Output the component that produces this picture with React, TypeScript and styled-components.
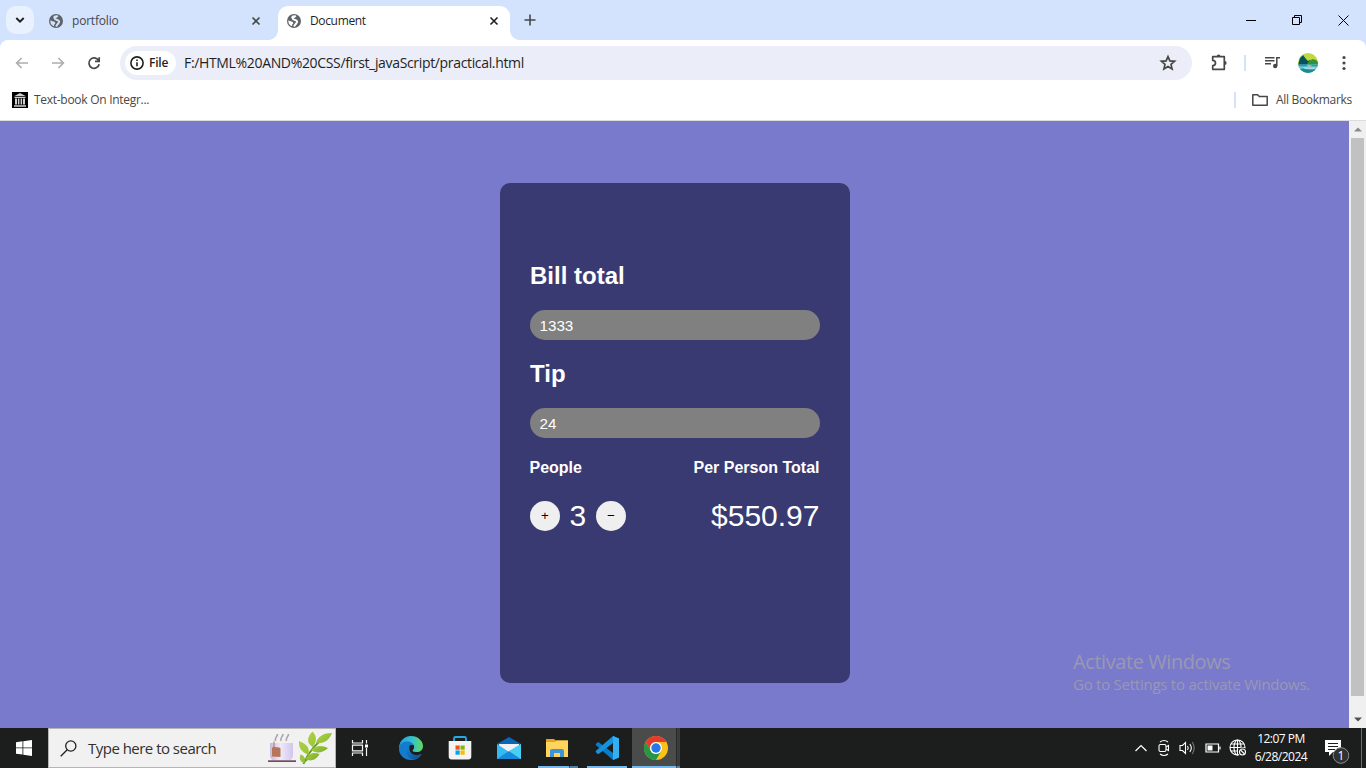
import React from "react";
import styled, { createGlobalStyle } from "styled-components";

const GlobalStyle = createGlobalStyle`
  * { box-sizing: border-box; }
  body { margin: 0; overflow: hidden; }
  svg { display: block; flex: none; }
  button { border: 0; padding: 0; background: none; font: inherit; color: inherit; }
`;

const ui = `"Segoe UI", "Open Sans", "Noto Sans", sans-serif`;

const Screen = styled.div`
  width: 1366px;
  height: 768px;
  display: flex;
  flex-direction: column;
  font-family: ${ui};
  overflow: hidden;
`;

const Label = styled.span<{ $size: number; $track?: number; $color?: string; $weight?: number }>`
  font-size: ${(p) => p.$size}px;
  letter-spacing: ${(p) => p.$track ?? 0}px;
  color: ${(p) => p.$color ?? "#1f1f1f"};
  font-weight: ${(p) => p.$weight ?? 400};
  line-height: 1.3;
  white-space: nowrap;
`;

/* ---------- browser frame ---------- */
const TabStrip = styled.div`
  height: 40px;
  display: flex;
  background: #d3e3fd;
  padding-left: 6px;
`;

const TabSearch = styled.button`
  width: 28px;
  height: 28px;
  margin-top: 6px;
  border-radius: 10px;
  background: #e9f1fe;
  display: grid;
  place-items: center;
`;

const Tab = styled.div<{ $active?: boolean }>`
  position: relative;
  width: ${(p) => (p.$active ? 232 : 244)}px;
  height: 34px;
  margin-top: 6px;
  display: flex;
  align-items: center;
  padding: 0 ${(p) => (p.$active ? 9 : 15)}px 5px ${(p) => (p.$active ? 8 : 14)}px;
  border-radius: 10px 10px 0 0;
  background: ${(p) => (p.$active ? "#fff" : "transparent")};
  gap: 8px;
  ${(p) =>
    p.$active &&
    `&::before, &::after {
      content: "";
      position: absolute;
      bottom: 0;
      width: 10px;
      height: 10px;
    }
    &::before { left: -10px; background: radial-gradient(circle at 0 0, transparent 9.5px, #fff 10.5px); }
    &::after { right: -10px; background: radial-gradient(circle at 100% 0, transparent 9.5px, #fff 10.5px); }`}
`;

const CloseButton = styled.button`
  margin-left: auto;
  width: 14px;
  height: 14px;
  display: grid;
  place-items: center;
`;

const NewTab = styled.button`
  width: 20px;
  height: 40px;
  margin-left: 10px;
  display: grid;
  place-items: center;
`;

const WindowButtons = styled.div`
  margin-left: auto;
  display: flex;
  height: 40px;
`;

const WindowButton = styled.button`
  width: 46px;
  display: grid;
  place-items: center;
`;

const ToolbarShell = styled.div`
  background: #d3e3fd;
`;

const Toolbar = styled.div`
  height: 46px;
  display: flex;
  align-items: center;
  background: #fff;
  border-radius: 8px 8px 0 0;
  padding: 0 12px;
`;

const NavButtons = styled.div`
  width: 108px;
  display: flex;
  gap: 16px;
`;

const Omnibox = styled.div`
  width: 1072px;
  height: 34px;
  border-radius: 17px;
  background: #ebeef8;
  display: flex;
  align-items: center;
  padding: 0 14px 0 5px;
`;

const FileChip = styled.div`
  width: 51px;
  height: 24px;
  border-radius: 12px;
  background: #fff;
  display: flex;
  align-items: center;
  gap: 4px;
  padding-left: 4px;
  margin-right: 8px;
`;

const StarSlot = styled.span`
  margin-left: auto;
`;

const Divider = styled.span<{ $gap: number }>`
  width: 2px;
  height: 16px;
  background: #d3e3fd;
  margin-right: ${(p) => p.$gap}px;
`;

const ToolbarActions = styled.div`
  display: flex;
  align-items: center;
  padding-left: 17px;
`;

const ActionSlot = styled.span<{ $gap: number }>`
  margin-right: ${(p) => p.$gap}px;
`;

const Bookmarks = styled.div`
  height: 35px;
  background: #fff;
  border-bottom: 1px solid #dcdcdc;
  display: flex;
  align-items: center;
  padding: 0 14px 6px 12px;
  gap: 6px;
`;

const AllBookmarks = styled.div`
  margin-left: auto;
  display: flex;
  align-items: center;
`;

/* ---------- page ---------- */
const Viewport = styled.div`
  position: relative;
  height: 607px;
  display: flex;
`;

const Page = styled.main`
  flex: 1;
  background: #797acc;
  display: flex;
  justify-content: center;
  align-items: flex-start;
  padding: 62px 0 0 1px;
  font-family: Arial, "Liberation Sans", sans-serif;
`;

const Card = styled.section`
  width: 350px;
  height: 500px;
  border-radius: 10px;
  background: #3a3a72;
  color: #fff;
  padding: 79px 30px 0;
`;

const Heading = styled.h2`
  margin: 0 0 20px;
  height: 28px;
  line-height: 28px;
  font-size: 24px;
`;

const Field = styled.input`
  display: block;
  width: 290px;
  height: 30px;
  margin-bottom: 20px;
  border: 0;
  border-radius: 15px;
  background: #808080;
  color: #fff;
  font: 15.2px Arial, "Liberation Sans", sans-serif;
  padding: 0 10px 0 9.5px;
  outline: 0;
`;

const Split = styled.div<{ $height: number }>`
  display: flex;
  justify-content: space-between;
  align-items: center;
  height: ${(p) => p.$height}px;
  margin: 0 0.5px 0 -0.5px;
`;

const SmallHeading = styled.h4`
  margin: 0;
  font-size: 16px;
  line-height: 18px;
  padding-top: 2px;
`;

const Totals = styled.div`
  margin-top: 23px;
`;

const Counter = styled.div`
  display: flex;
  align-items: center;
  gap: 9.6px;
  padding-left: 0.5px;
`;

const Amount = styled.span`
  font-size: 30px;
  line-height: 34px;
  padding-bottom: 1px;
`;

const RoundButton = styled.button`
  width: 30px;
  height: 30px;
  border-radius: 50%;
  background: #efefef;
  color: #000;
  font-size: 13.333px;
  line-height: 30px;
  text-align: center;
`;

const ScrollBar = styled.div`
  width: 17px;
  background: #f0f0f0;
  display: flex;
  flex-direction: column;
  align-items: center;
`;

const ScrollArrow = styled.div`
  height: 17px;
  display: grid;
  place-items: center;
`;

const ScrollThumb = styled.div`
  width: 13px;
  height: 558px;
  background: #c1c1c1;
  margin-bottom: 15px;
`;

const Watermark = styled.div`
  position: absolute;
  left: 1073px;
  top: 528px;
  display: flex;
  flex-direction: column;
`;

/* ---------- taskbar ---------- */
const Taskbar = styled.div`
  height: 40px;
  background: #1c1e1e;
  display: flex;
`;

const StartButton = styled.button`
  width: 48px;
  display: grid;
  place-items: center;
`;

const SearchBox = styled.div`
  width: 288px;
  height: 40px;
  background: #f1f1f1;
  border: 1px solid #b5b5b5;
  display: flex;
  align-items: center;
  padding: 0 2px 0 11px;
`;

const SearchText = styled.div`
  flex: 1;
  margin-left: 11px;
`;

const AppButton = styled.div<{ $width?: number; $current?: boolean; $open?: boolean; $offset?: number; $inset?: number }>`
  width: ${(p) => p.$width ?? 49}px;
  height: 40px;
  display: flex;
  align-items: center;
  justify-content: center;
  margin-left: ${(p) => p.$offset ?? 0}px;
  background: ${(p) => (p.$current ? "#4a4b4b" : "transparent")};
  border-bottom: 2px solid ${(p) => (p.$open ? "#76b9ed" : "transparent")};
  padding-top: 2px;
  padding-left: ${(p) => p.$inset ?? 0}px;
`;

const StackEdge = styled.div<{ $current?: boolean }>`
  width: ${(p) => (p.$current ? 4 : 9)}px;
  height: 40px;
  border-left: 1px solid ${(p) => (p.$current ? "#292b2b" : "transparent")};
  background: ${(p) => (p.$current ? "#3a3b3b" : "transparent")};
  border-bottom: 2px solid #557f9f;
`;

const Tray = styled.div`
  margin-left: auto;
  display: flex;
  align-items: center;
`;

const TrayIcons = styled.div`
  display: flex;
  align-items: center;
  gap: 8.5px;
`;

const Clock = styled.div`
  width: 68px;
  display: flex;
  flex-direction: column;
  align-items: center;
  gap: 2px;
`;

const Notifications = styled.div`
  width: 47px;
  height: 40px;
  border-right: 1px solid #6a6a6a;
  margin-right: 4px;
  padding: 9px 0 0 10px;
`;

/* ---------- icons ---------- */
const Globe = ({ land = "#fff" }: { land?: string }) => (
  <svg width="16" height="16" viewBox="0 0 16 16">
    <circle cx="8" cy="8" r="7" fill="#5f6368" />
    <path
      d="M9.600 2.700C8.900 4.200 6.800 3.900 6.500 5.200 6.300 6.500 8.300 6.600 9.500 7.100 11.200 7.800 11.800 8.600 10.600 10 9.700 11 8.900 12.200 8 13.500"
      fill="none"
      stroke={land}
      strokeWidth="1.900"
    />
    <path d="M2.400 7.200 4.400 8.200 6.600 8.800 7.400 10.200 6.300 11.200 6 13.300A5.700 5.700 0 0 1 2.400 7.200ZM6.500 2.500 9.800 2.600 8.200 4.500 6.500 5.500 5 4.300Z" fill={land} />
  </svg>
);

const Cross = ({ color = "#474747" }: { color?: string }) => (
  <svg width="10" height="10" viewBox="0 0 10 10" stroke={color} strokeWidth="1.6">
    <path d="m1.500 1.500 7 7M8.500 1.500l-7 7" />
  </svg>
);

const Arrow = ({ flip }: { flip?: boolean }) => (
  <svg width="20" height="20" viewBox="0 0 20 20" fill="none" stroke="#adadad" strokeWidth="1.6">
    <path d={flip ? "M4 10h11M10.4 5l5 5-5 5" : "M16 10H5M9.6 5l-5 5 5 5"} />
  </svg>
);

const Reload = () => (
  <svg width="20" height="20" viewBox="0 0 20 20" fill="none" stroke="#474747" strokeWidth="1.7">
    <path d="M14.6 7.4A5.2 5.2 0 1 0 15.2 11.3M15.2 4.2V8.3H11" />
  </svg>
);

const Info = () => (
  <svg width="16" height="16" viewBox="0 0 16 16" fill="none" stroke="#1f1f1f" strokeWidth="1.6">
    <circle cx="8" cy="8" r="6.1" />
    <path d="M8 7.2v4M8 4.5v1.5" />
  </svg>
);

const Star = () => (
  <svg width="20" height="20" viewBox="0 0 20 20" fill="none" stroke="#474747" strokeWidth="1.7">
    <path d="m10 3.600 1.900 4.300 4.700.4-3.600 3.100 1.100 4.600-4.100-2.500L5.900 16 7 11.400 3.400 8.300l4.700-.4Z" />
  </svg>
);

const Puzzle = () => (
  <svg width="20" height="20" viewBox="0 0 20 20">
    <path d="M3.700 3.700H15.300v12.600H3.700v-3.700c2-.1 2.800-1.100 2.800-2.600S5.700 7.500 3.700 7.400Z" fill="none" stroke="#474747" strokeWidth="1.700" strokeLinejoin="round" />
    <path d="M7.700 3.300a1.900 1.900 0 0 1 3.800 0ZM15.600 8a2 2 0 0 1 0 4Z" fill="#474747" />
  </svg>
);

const Queue = () => (
  <svg width="18" height="16" viewBox="0 0 18 16" stroke="#474747" strokeWidth="1.500" fill="none">
    <path d="M1 2.800h9.500M1 5.800h9.500M1 8.800h6M12.800 11V2.800H16" />
    <circle cx="11.200" cy="11" r="2.200" fill="#474747" stroke="none" />
  </svg>
);

const Avatar = () => (
  <svg width="20" height="20" viewBox="0 0 20 20">
    <clipPath id="avatar"><circle cx="10" cy="10" r="10" /></clipPath>
    <g clipPath="url(#avatar)">
      <path d="M0 0h20v20H0Z" fill="#bfd843" />
      <path d="M0 12 2 5 5 2l3 4 2 2 2-1v5Z" fill="#07535a" />
      <path d="M9 12c1-6 9-9 12-1v2H9Z" fill="#36913b" />
      <path d="M0 11.500h20V20H0Z" fill="#65c8df" />
      <path d="M0 12.300h9v1H2zM12 12.300h8v1h-7zM2 16c4-2 8 2 15 0v4H2Z" fill="#1e8a91" />
      <path d="M5 14.500h12v1.300H7z" fill="#b0e5ed" />
      <path d="M10 12.500h4l-2 2z" fill="#e5a7a1" />
    </g>
  </svg>
);

const Dots = () => (
  <svg width="6" height="16" viewBox="0 0 6 16" fill="#474747">
    <circle cx="3" cy="2.500" r="1.600" /><circle cx="3" cy="8" r="1.600" /><circle cx="3" cy="13.500" r="1.600" />
  </svg>
);

const Archive = () => (
  <svg width="16" height="16" viewBox="0 0 16 16">
    <path d="M0 0h16v16H0Z" fill="#000" />
    <path d="M2 4.200 8 1l6 3.200ZM2.500 5h11v1h-11ZM3 6.500h2v6H3zM5.900 6.500h1.500v6H5.900zM8.600 6.500h1.500v6H8.600zM11 6.500h2v6h-2zM2 13.200h12v1.500H2z" fill="#d0d0d0" />
  </svg>
);

const Folder = () => (
  <svg width="18" height="14" viewBox="0 0 18 14" fill="none" stroke="#474747" strokeWidth="1.500">
    <path d="M1.800 1.800h4.800l1.700 1.700h7.900v8.700H1.800Z" strokeLinejoin="round" />
  </svg>
);

const TeaAndLeaves = () => (
  <svg width="66" height="36" viewBox="0 0 66 36">
    <defs>
      <linearGradient id="cup"><stop stopColor="#c5b8d8" /><stop offset=".45" stopColor="#eee9fb" /><stop offset="1" stopColor="#d1c6eb" /></linearGradient>
      <linearGradient id="leaf" x1="0" y1="0" x2="1" y2="1"><stop stopColor="#b4d34b" /><stop offset=".5" stopColor="#9cc63a" /><stop offset="1" stopColor="#5a9a22" /></linearGradient>
    </defs>
    <g fill="none" stroke="#a9a4aa" strokeWidth="1.600">
      <path d="M8.500 11c-1.500-3 2-4 2-7M14 11c-1.500-3 2-4 2-7M19.500 11c-1.500-3 2-4 2-7" />
    </g>
    <path d="M3 13h23v12c0 3.500-2 5.500-5.500 5.500h-12C5 30.500 3 28.500 3 25Z" fill="url(#cup)" />
    <path d="M6.500 11.500h1V17l5 .5 1 1V27L5 26.500V18l1.500-1.500Z" fill="#b87458" />
    <path d="M1 30.300h28V32H1Z" fill="#76485e" />
    <path d="M36.500 34C41 23 47 14 60 6M38 31c2-2 4-3 7-4" fill="none" stroke="#5f9a28" strokeWidth="1.800" />
    <g fill="url(#leaf)">
      <path d="M46 17C39 13 40 7 45.500 1.500c5 5 4 10 .5 15.500ZM49 13c2-7 8-10 16-10-3 8-9 11-16 10ZM41.500 25c-7-3-10-7-9.500-14 8 3 11 7 9.500 14ZM44 20c5-5 11-5 17-2-5 5-12 6-17 2ZM37 33c-4-1-5-5-3.500-8.500 4 1 6 5 3.500 8.500ZM38.500 29c4-6 8-7 14-5-3 6-9 8-14 5Z" />
    </g>
  </svg>
);

const TaskView = () => (
  <svg width="18" height="16" viewBox="0 0 18 16" fill="none" stroke="#f4f4f4" strokeWidth="1.200">
    <path d="M1.500 0v3h10V0M1.500 16v-3h10v3M1.500 5.200h10v5.600h-10ZM15.500 0v3.500M15.500 8v8" />
    <path d="M14 4.500h3v3h-3z" fill="#fff" stroke="none" />
  </svg>
);

const Edge = () => (
  <svg width="24" height="24" viewBox="0 0 24 24">
    <defs>
      <linearGradient id="edgeTop" x1="0" x2="1"><stop stopColor="#259ee2" /><stop offset=".55" stopColor="#35c1cf" /><stop offset="1" stopColor="#62d957" /></linearGradient>
      <linearGradient id="edgeLow" x1="0" y1="0" x2="1" y2="1"><stop stopColor="#1686d8" /><stop offset="1" stopColor="#0c4a91" /></linearGradient>
    </defs>
    <path d="M0 11C1 4 6 0 12 0c7 0 12 5 12 10 0 4-3 6-6 6-4 0-5-1-4-2 3-4 0-7-4-7C5 7 1 9 0 14Z" fill="url(#edgeTop)" />
    <path d="M0 13C0 8 4 5.500 8 5.500c4 0 6 2 6.500 4C12 8 8 10 8 14c0 5 6 8 14.500 4-2 4-6 6-10.500 6C5 24 0 19 0 13Z" fill="#137ccc" />
    <path d="M10.500 9C7 11 6 14 7.500 18c1.600 4 5 5.500 7.500 5.500 3-.8 6-2.500 7.500-5.500C16 21 9 18 10.500 9Z" fill="url(#edgeLow)" />
  </svg>
);

const Store = () => (
  <svg width="24" height="24" viewBox="0 0 24 24">
    <path d="M6 6V2.500C6 1.400 6.700 1 7.500 1h9c.8 0 1.500.4 1.500 1.500V6" fill="none" stroke="#27a9e5" strokeWidth="1.800" />
    <path d="M.7 5h22.600v15.500c0 2-1 3-3 3H3.700c-2 0-3-1-3-3Z" fill="#f3f3f3" />
    <path d="M7.500 9.500h4.200v4.200H7.500z" fill="#f25022" /><path d="M12.500 9.500h4.200v4.200h-4.200z" fill="#7fba00" />
    <path d="M7.500 14.500h4.200v4.200H7.500z" fill="#00a4ef" /><path d="M12.500 14.500h4.200v4.200h-4.200z" fill="#ffb900" />
  </svg>
);

const Mail = () => (
  <svg width="24" height="24" viewBox="0 0 24 24">
    <path d="M0 8 12 1l12 7v5H0Z" fill="#0967b7" />
    <path d="M2 8h20v9H2Z" fill="#f2f2f2" />
    <path d="M0 8v15h24V8L12 16Z" fill="#35b9f1" />
    <path d="m0 23 12-8 12 8Z" fill="#178bd9" /><path d="M12 15 24 8v15Z" fill="#48cff5" />
  </svg>
);

const Explorer = () => (
  <svg width="24" height="22" viewBox="0 0 24 22">
    <path d="M1 2h8l2 1.500h12v6H1Z" fill="#e7a31c" />
    <path d="M1 5h9l1.500-1.500H23V20H1Z" fill="#ffd45d" />
    <path d="M5 20v-6c0-1.200.8-2 2-2h10c1.200 0 2 .8 2 2v6h-4v-4H9v4Z" fill="#3f94d8" />
  </svg>
);

const Code = () => (
  <svg width="24" height="24" viewBox="0 0 24 24">
    <path d="m18 0 6 2.500v19L18 24 1 9.200c-.5-.5-.5-1 0-1.500l1.500-1.300c.5-.4 1-.3 1.500 0L18 17Z" fill="#087dcb" />
    <path d="M18 7 4 17.800c-.5.300-1 .300-1.500 0L1 16.300c-.5-.4-.5-1 0-1.500L18 0Z" fill="#1593dd" />
    <path d="m18 0 6 2.500v19L18 24Z" fill="#35aff4" />
  </svg>
);

const Chrome = () => (
  <svg width="24" height="24" viewBox="0 0 24 24">
    <circle cx="12" cy="12" r="12" fill="#fbc116" />
    <path d="M1.600 6A12 12 0 0 1 22.400 6H12a6 6 0 0 0-5.200 9Z" fill="#e33b2e" />
    <path d="M1.600 6A12 12 0 0 0 12 24l5.200-9a6 6 0 0 1-10.400 0Z" fill="#269746" />
    <circle cx="12" cy="12" r="6" fill="#fff" /><circle cx="12" cy="12" r="4.700" fill="#2678e8" />
  </svg>
);

const TrayCamera = () => (
  <svg width="14" height="18" viewBox="0 0 14 18" fill="none" stroke="#fff" strokeWidth="1.100">
    <path d="M3 3q4-3 8 0M3 15q4 3 8 0" />
    <rect x="2" y="5.500" width="7" height="7" rx="1.500" /><path d="m9 8 2.500-1.500v5L9 10" />
  </svg>
);
const TraySound = () => (
  <svg width="17" height="16" viewBox="0 0 17 16" fill="none" stroke="#fff" strokeWidth="1.100">
    <path d="M1 5.500h2.500l3-3v11l-3-3H1ZM8.500 6q1.500 2 0 4M10.800 4q3 4 0 8" /><path d="M13.200 2q4 6 0 12" stroke="#777" />
  </svg>
);
const TrayBattery = () => (
  <svg width="16" height="12" viewBox="0 0 16 12" fill="none" stroke="#fff" strokeWidth="1.200">
    <path d="M1 2h12.500v8H1ZM15 4.500v3" /><path d="M2.500 3.500h5v5h-5z" fill="#fff" stroke="none" />
  </svg>
);
const TrayNetwork = () => (
  <svg width="18" height="18" viewBox="0 0 18 18" fill="none" stroke="#fff" strokeWidth="1.100">
    <circle cx="8.500" cy="8.500" r="7.500" /><ellipse cx="8.500" cy="8.500" rx="3.500" ry="7.500" /><path d="M1 8.500h15M2 5h13M2 12h7M8.500 1v15" />
    <circle cx="13.500" cy="13" r="4.500" fill="#1c1e1e" stroke="none" /><circle cx="13.500" cy="13" r="3" /><path d="m11.500 11 4 4" />
  </svg>
);

export default function App() {
  return (
    <Screen>
      <GlobalStyle />
      <TabStrip>
        <TabSearch>
          <svg width="10" height="8" viewBox="0 0 10 8" fill="none" stroke="#1f1f1f" strokeWidth="1.900"><path d="m1.300 2 3.700 3.700L8.700 2" /></svg>
        </TabSearch>
        <Tab><Globe land="#d3e3fd" /><Label $size={12} $track={-0.2} $color="#474747">portfolio</Label><CloseButton><Cross /></CloseButton></Tab>
        <Tab $active><Globe /><Label $size={12} $track={-0.35}>Document</Label><CloseButton><Cross color="#1f1f1f" /></CloseButton></Tab>
        <NewTab><svg width="12" height="12" stroke="#474747" strokeWidth="1.600"><path d="M6 .5v11M.5 6h11" /></svg></NewTab>
        <WindowButtons>
          <WindowButton><svg width="10" height="10" stroke="#000"><path d="M0 5.500h10" /></svg></WindowButton>
          <WindowButton><svg width="10" height="10" fill="none" stroke="#000"><path d="M.5 2.500h7v7h-7ZM2.500 2.500v-2h7v7h-2" /></svg></WindowButton>
          <WindowButton><svg width="11" height="11" stroke="#000"><path d="m.5.5 10 10M10.500.5l-10 10" /></svg></WindowButton>
        </WindowButtons>
      </TabStrip>
      <ToolbarShell>
        <Toolbar>
          <NavButtons><Arrow /><Arrow flip /><Reload /></NavButtons>
          <Omnibox>
            <FileChip><Info /><Label $size={12} $weight={600} $track={-0.2}>File</Label></FileChip>
            <Label $size={14} $track={-0.34}>F:/HTML%20AND%20CSS/first_javaScript/practical.html</Label>
            <StarSlot><Star /></StarSlot>
          </Omnibox>
          <ToolbarActions>
            <ActionSlot $gap={15}><Puzzle /></ActionSlot>
            <Divider $gap={18} />
            <ActionSlot $gap={16}><Queue /></ActionSlot>
            <ActionSlot $gap={23}><Avatar /></ActionSlot>
            <Dots />
          </ToolbarActions>
        </Toolbar>
      </ToolbarShell>
      <Bookmarks>
        <Archive />
        <Label $size={12} $track={-0.28} $color="#474747">Text-book On Integr...</Label>
        <AllBookmarks>
          <Divider $gap={15} />
          <ActionSlot $gap={7}><Folder /></ActionSlot>
          <Label $size={12} $track={-0.3} $color="#474747">All Bookmarks</Label>
        </AllBookmarks>
      </Bookmarks>

      <Viewport>
        <Page>
          <Card>
            <Heading>Bill total</Heading>
            <Field defaultValue="1333" />
            <Heading>Tip</Heading>
            <Field defaultValue="24" />
            <Split $height={18}><SmallHeading>People</SmallHeading><SmallHeading>Per Person Total</SmallHeading></Split>
            <Totals>
              <Split $height={34}>
                <Counter><RoundButton>+</RoundButton><Amount>3</Amount><RoundButton>−</RoundButton></Counter>
                <Amount>$550.97</Amount>
              </Split>
            </Totals>
          </Card>
        </Page>
        <ScrollBar>
          <ScrollArrow><svg width="8" height="5"><path d="M0 4.500 4 .5l4 4Z" fill="#8a8a8a" /></svg></ScrollArrow>
          <ScrollThumb />
          <ScrollArrow><svg width="8" height="5"><path d="m0 .5 4 4 4-4Z" fill="#505050" /></svg></ScrollArrow>
        </ScrollBar>
        <Watermark>
          <Label $size={20} $track={-0.42} $color="#9998b3">Activate Windows</Label>
          <Label $size={15} $track={-0.25} $color="#9998b3">Go to Settings to activate Windows.</Label>
        </Watermark>
      </Viewport>

      <Taskbar>
        <StartButton>
          <svg width="16" height="16" viewBox="0 0 16 16" fill="#fff"><path d="M0 2.200 6.500 1.300v6.200H0ZM7.300 1.200 16 0v7.500H7.300ZM0 8.300h6.500v6.200L0 13.700ZM7.300 8.300H16V16l-8.700-1.200Z" /></svg>
        </StartButton>
        <SearchBox>
          <svg width="17" height="17" viewBox="0 0 17 17" fill="none" stroke="#202020" strokeWidth="1.300"><circle cx="10.800" cy="6" r="5.100" /><path d="M7.200 9.700.7 16.200" /></svg>
          <SearchText><Label $size={15} $track={-0.52} $color="#303030">Type here to search</Label></SearchText>
          <TeaAndLeaves />
        </SearchBox>
        <AppButton $width={48}><TaskView /></AppButton>
        <AppButton $width={54}><Edge /></AppButton>
        <AppButton $width={43}><Store /></AppButton>
        <AppButton $width={56}><Mail /></AppButton>
        <AppButton $width={31} $open $offset={1} $inset={7}><Explorer /></AppButton>
        <StackEdge />
        <AppButton $width={40} $open $offset={9}><Code /></AppButton>
        <AppButton $width={44} $open $current $offset={5} $inset={4}><Chrome /></AppButton>
        <StackEdge $current />
        <Tray>
          <TrayIcons>
            <svg width="14" height="14" fill="none" stroke="#fff" strokeWidth="1.200"><path d="m1.500 10 5.500-5.500 5.500 5.500" /></svg>
            <TrayCamera /><TraySound /><TrayBattery /><TrayNetwork />
          </TrayIcons>
          <Clock>
            <Label $size={12} $track={-0.5} $color="#fff">12:07 PM</Label>
            <Label $size={12} $track={-0.5} $color="#fff">6/28/2024</Label>
          </Clock>
          <Notifications>
            <svg width="26" height="28" viewBox="0 0 26 28">
              <path d="M0 3h16v12H8l-4 4v-4H0Z" fill="#fff" /><path d="M3 6.500h10M3 9.500h10M3 12.500h7" stroke="#1c1e1e" />
              <circle cx="16" cy="18.500" r="7.800" fill="#303232" stroke="#8b8b8b" />
              <text x="16" y="22.500" textAnchor="middle" fontFamily={ui} fontSize="12" fill="#fff">1</text>
            </svg>
          </Notifications>
        </Tray>
      </Taskbar>
    </Screen>
  );
}
